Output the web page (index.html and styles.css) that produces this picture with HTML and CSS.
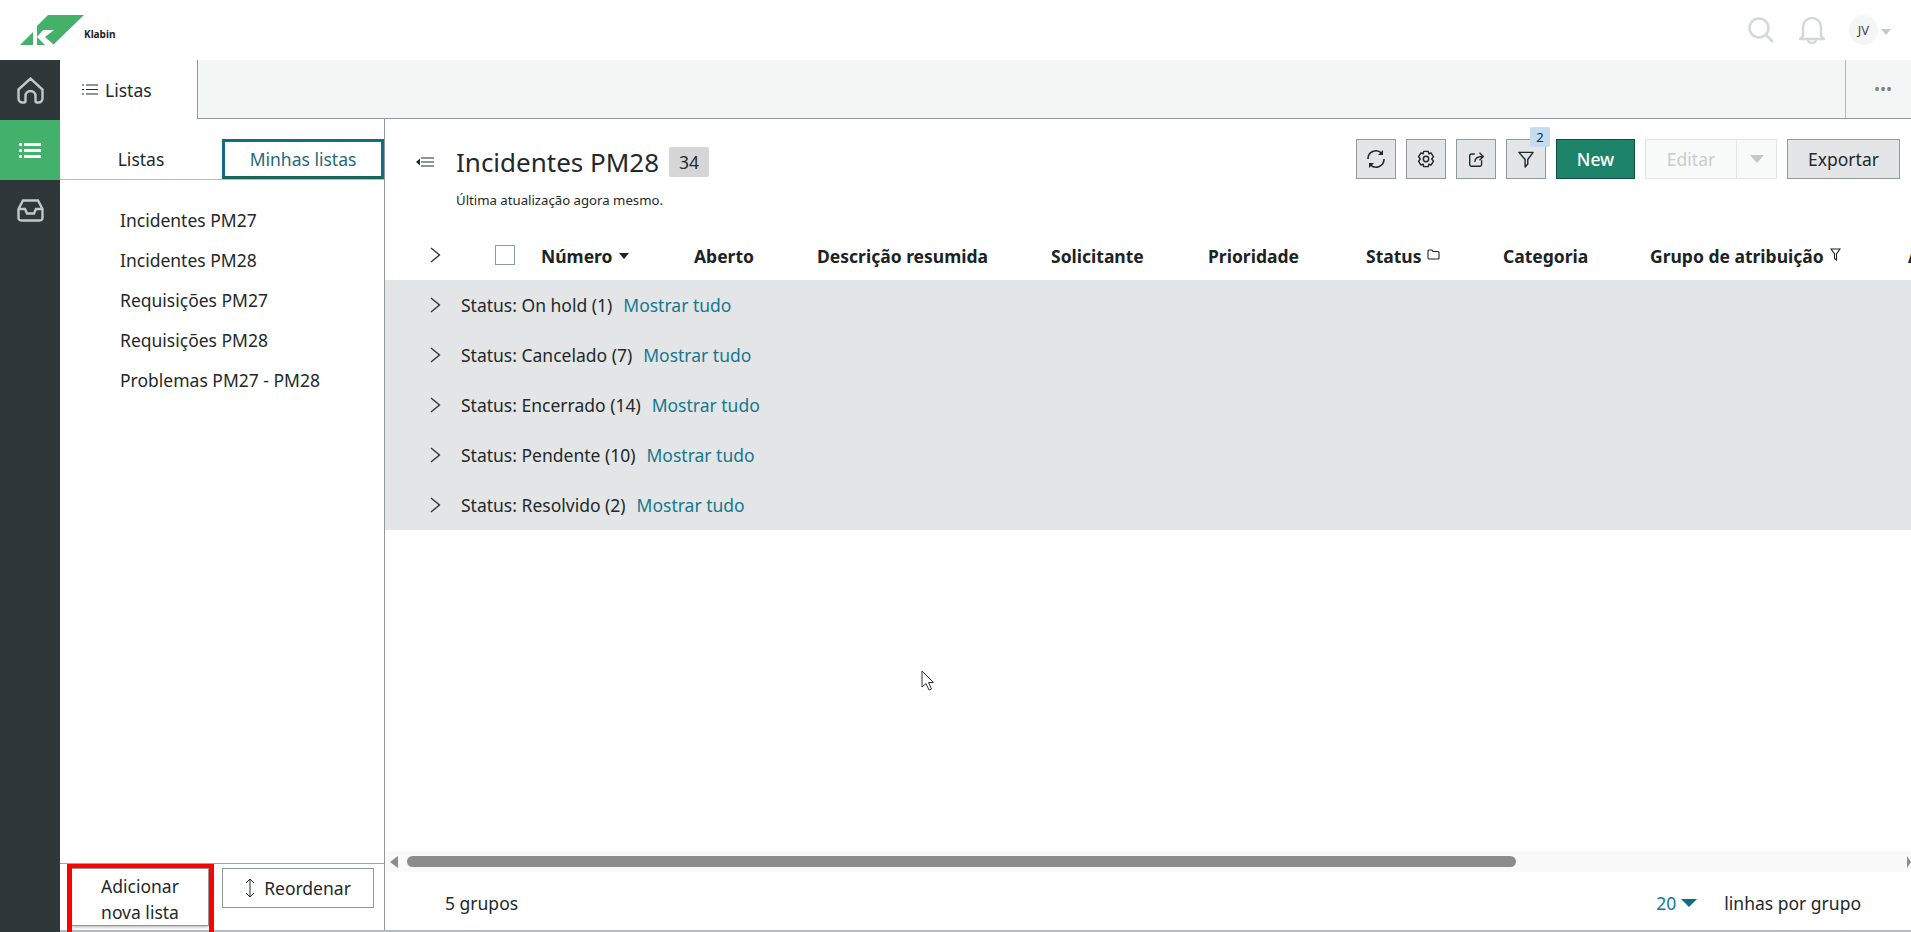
FILE: index.html
```html
<!DOCTYPE html>
<html lang="pt">
<head>
<title>Listas</title>
<meta charset="UTF-8">
<link rel="stylesheet" href="styles.css">
</head>
<body>
<header class="topbar">
	<div class="logo">
		<svg width="84" height="46" viewBox="0 0 84 46">
			<polygon fill="#43b16a" points="20,45 33,32 33,45"/>
			<polygon fill="#43b16a" points="48,15 84,15 53,45 37,45 37,26"/>
			<polygon fill="#fff" points="43,30 54,30 45,37 54,45 45,45 37,37"/>
		</svg>
		<span class="logo-name">Klabin</span>
	</div>
	<div class="top-actions">
		<svg class="top-search" width="26" height="26" viewBox="0 0 26 26"><circle cx="11" cy="11" r="9.5"/><path d="M18 18 L25 25"/></svg>
		<svg class="top-bell" width="26" height="28" viewBox="0 0 26 28"><path d="M4 20 V11 a9 9 0 0 1 18 0 V20 L25 23 H1 Z"/><path d="M9 23.5 a4 3.5 0 0 0 8 0"/></svg>
		<span class="avatar">JV</span>
		<span class="caret caret-user"></span>
	</div>
</header>

<div class="app">
	<nav class="rail">
		<a class="rail-item">
			<svg width="27" height="27" viewBox="0 0 27 27"><path d="M1.5 12.5 L13.5 1.5 L25.5 12.5 V21.5 a4 4 0 0 1-4 4 H20 a1.5 1.5 0 0 1-1.5-1.5 V19 a5 5 0 0 0-10 0 V24 a1.5 1.5 0 0 1-1.5 1.5 H5.5 a4 4 0 0 1-4-4 Z"/></svg>
		</a>
		<a class="rail-item rail-active">
			<svg width="22" height="15" viewBox="0 0 22 15"><path d="M0 1.5 H3 M5 1.5 H22 M0 7.5 H3 M5 7.5 H22 M0 13.5 H3 M5 13.5 H22"/></svg>
		</a>
		<a class="rail-item">
			<svg width="27" height="23" viewBox="0 0 27 23"><path d="M6 1.5 H21 L25.5 10 V19 a2.5 2.5 0 0 1-2.5 2.5 H4 A2.5 2.5 0 0 1 1.5 19 V10 Z M1.5 10 H8 L10 14.5 H17 L19 10 H25.5"/></svg>
		</a>
	</nav>

	<div class="workspace">
		<div class="tabbar">
			<div class="tab">
				<svg width="16" height="11" viewBox="0 0 16 11"><path d="M0 1 H2 M4 1 H16 M0 5.5 H2 M4 5.5 H16 M0 10 H2 M4 10 H16"/></svg>
				Listas
			</div>
			<div class="tab-fill"></div>
			<div class="tab-more">&bull;&bull;&bull;</div>
		</div>

		<div class="panels">
			<aside class="lists">
				<div class="lists-tabs">
					<span class="lists-tab">Listas</span>
					<span class="lists-tab lists-tab-on">Minhas listas</span>
				</div>
				<ul class="lists-items">
					<li>Incidentes PM27</li>
					<li>Incidentes PM28</li>
					<li>Requisições PM27</li>
					<li>Requisições PM28</li>
					<li>Problemas PM27 - PM28</li>
				</ul>
				<div class="lists-foot">
					<button class="btn-add">Adicionar<br>nova lista</button>
					<button class="btn-order">
						<svg width="10" height="20" viewBox="0 0 10 20"><path d="M5 1 V19 M1 5 L5 1 L9 5 M1 15 L5 19 L9 15"/></svg>
						Reordenar
					</button>
				</div>
			</aside>

			<main class="content">
				<div class="head">
					<div class="head-title">
						<div class="title-line">
							<svg class="collapse" width="18" height="10" viewBox="0 0 18 10"><path class="solid" d="M0 5 L4 1.5 V8.5 Z"/><path d="M5 1 H18 M5 5 H18 M5 9 H18"/></svg>
							<h1>Incidentes PM28</h1>
							<span class="count">34</span>
						</div>
						<p class="updated">Última atualização agora mesmo.</p>
					</div>
					<div class="toolbar">
						<button class="btn-icon"><svg width="20" height="20" viewBox="0 0 20 20"><path d="M2 10 a8 8 0 0 1 13.5-6 M18 10 a8 8 0 0 1-13.5 6"/><path class="solid" d="M17 1 V6 H12 Z M3 19 V14 H8 Z"/></svg></button>
						<button class="btn-icon"><svg width="18" height="18" viewBox="0 0 20 20"><path d="M7.5 1.5 H12.5 L13.2 4.2 L15.8 3.4 L18.3 7.6 L16.3 10 L18.3 12.4 L15.8 16.6 L13.2 15.8 L12.5 18.5 H7.5 L6.8 15.8 L4.2 16.6 L1.7 12.4 L3.7 10 L1.7 7.6 L4.2 3.4 L6.8 4.2 Z"/><circle cx="10" cy="10" r="3"/></svg></button>
						<button class="btn-icon"><svg width="17" height="17" viewBox="0 0 20 20"><path d="M8 3.5 H4 a2 2 0 0 0-2 2 V16 a2 2 0 0 0 2 2 H14 a2 2 0 0 0 2-2 V11"/><path d="M8 13 C8 8.5 11 6.5 17 6.5 M13.5 2 L18 6.5 L13.5 11"/></svg></button>
						<div class="filter-wrap">
							<button class="btn-icon"><svg width="16" height="19" viewBox="0 0 18 20"><path d="M1 2 H17 L11 10 V15 L8 18.5 V10 Z"/></svg></button>
							<span class="filter-badge">2</span>
						</div>
						<button class="btn-new">New</button>
						<div class="btn-split">
							<span class="split-label">Editar</span>
							<span class="split-arrow"><span class="caret caret-off"></span></span>
						</div>
						<button class="btn-export">Exportar</button>
					</div>
				</div>

				<div class="grid-area">
					<div class="grid-head">
						<span class="chev-cell"><svg class="chev" width="11" height="16" viewBox="0 0 11 16"><path d="M1 1 L9.5 8 L1 15"/></svg></span>
						<span class="check"></span>
						<span class="col">Número <span class="sort"></span></span>
						<span class="col">Aberto</span>
						<span class="col">Descrição resumida</span>
						<span class="col">Solicitante</span>
						<span class="col">Prioridade</span>
						<span class="col">Status <svg class="col-icon" width="13" height="11" viewBox="0 0 13 11"><path d="M1 2 a1 1 0 0 1 1-1 H5 L6 2.5 H11 a1 1 0 0 1 1 1 V9 a1 1 0 0 1-1 1 H2 a1 1 0 0 1-1-1 Z"/></svg></span>
						<span class="col">Categoria</span>
						<span class="col">Grupo de atribuição <svg class="col-icon" width="11" height="13" viewBox="0 0 11 13"><path d="M1 1 H10 L6.5 6 V12 L4.5 10.5 V6 Z"/></svg></span>
						<span class="col">A</span>
					</div>
					<div class="group"><svg class="chev" width="11" height="16" viewBox="0 0 11 16"><path d="M1 1 L9.5 8 L1 15"/></svg><span class="group-name">Status: On hold (1)</span><a class="link">Mostrar tudo</a></div>
					<div class="group"><svg class="chev" width="11" height="16" viewBox="0 0 11 16"><path d="M1 1 L9.5 8 L1 15"/></svg><span class="group-name">Status: Cancelado (7)</span><a class="link">Mostrar tudo</a></div>
					<div class="group"><svg class="chev" width="11" height="16" viewBox="0 0 11 16"><path d="M1 1 L9.5 8 L1 15"/></svg><span class="group-name">Status: Encerrado (14)</span><a class="link">Mostrar tudo</a></div>
					<div class="group"><svg class="chev" width="11" height="16" viewBox="0 0 11 16"><path d="M1 1 L9.5 8 L1 15"/></svg><span class="group-name">Status: Pendente (10)</span><a class="link">Mostrar tudo</a></div>
					<div class="group"><svg class="chev" width="11" height="16" viewBox="0 0 11 16"><path d="M1 1 L9.5 8 L1 15"/></svg><span class="group-name">Status: Resolvido (2)</span><a class="link">Mostrar tudo</a></div>
				</div>

				<div class="hscroll">
					<span class="arrow-left"></span>
					<span class="thumb"></span>
					<span class="arrow-right"></span>
				</div>
				<div class="pager">
					<span>5 grupos</span>
					<div class="pager-right">
						<span class="link">20</span><span class="caret caret-teal"></span>
						<span class="per-group">linhas por grupo</span>
					</div>
				</div>
			</main>
		</div>
	</div>
</div>

<!-- annotation and mouse pointer lying over the page -->
<div class="red-mark"></div>
<svg class="pointer" width="14" height="22" viewBox="0 0 14 22"><path d="M1 1 V17 L5 13.5 L8 20 L10.5 19 L7.5 12.5 H12.5 Z"/></svg>
</body>
</html>
```

FILE: styles.css
```css
* {
	box-sizing: border-box;
}
html, body {
	height: 100%;
}
body {
	margin: 0;
	overflow: hidden;
	font-family: "Noto Sans", Lato, sans-serif;
	font-size: 17.5px;
	color: #23292b;
	background: #fff;
}
svg {
	fill: none;
	stroke: currentColor;
	display: block;
}
svg .solid {
	fill: currentColor;
	stroke: none;
}
button {
	font: inherit;
	color: inherit;
	cursor: pointer;
}

/* top bar */
.topbar {
	height: 60px;
	display: flex;
	justify-content: space-between;
}
.logo {
	display: flex;
}
.logo svg {
	stroke: none;
}
.logo-name {
	font-size: 10px;
	font-weight: 700;
	color: #222;
	margin-top: 27px;
}
.top-actions {
	display: flex;
	align-items: center;
	padding-right: 20px;
	color: #d5d8d8;
}
.top-search {
	stroke-width: 2.5;
	margin-right: 25px;
}
.top-bell {
	stroke-width: 2.5;
	margin-right: 24px;
}
.avatar {
	width: 29px;
	height: 30px;
	border-radius: 50%;
	background: #f4f6f5;
	color: #444;
	font-size: 13px;
	display: flex;
	align-items: center;
	justify-content: center;
}
.caret {
	display: inline-block;
	width: 0;
	height: 0;
	border-left: 5px solid transparent;
	border-right: 5px solid transparent;
	border-top: 6px solid #c3c8c8;
}
.caret-user {
	margin-left: 3px;
	margin-top: 4px;
}

.app {
	display: flex;
	height: 872px;
}

/* dark rail */
.rail {
	width: 60px;
	flex: none;
	background: #2e3739;
	color: #c3c8c8;
}
.rail-item {
	height: 60px;
	display: flex;
	align-items: center;
	justify-content: center;
}
.rail-item svg {
	stroke-width: 2.4;
}
.rail-active {
	background: #43b16a;
	color: #fff;
}
.rail-active svg {
	stroke-width: 3;
}

.workspace {
	flex: 1;
	display: flex;
	flex-direction: column;
	min-width: 0;
	border-bottom: 2px solid #b4bcbc;
}

/* tab strip */
.tabbar {
	height: 59px;
	flex: none;
	display: flex;
	background: #f4f6f5;
	border-bottom: 1px solid #8e9a9b;
}
.tab {
	width: 138px;
	margin-bottom: -1px;
	background: #fff;
	border-right: 1px solid #8e9a9b;
	padding-left: 22px;
	display: flex;
	align-items: center;
	gap: 7px;
}
.tab-fill {
	flex: 1;
}
.tab-more {
	width: 66px;
	border-left: 1px solid #b4bcbc;
	padding-left: 9px;
	color: #7a8485;
	font-size: 16px;
	display: flex;
	align-items: center;
	justify-content: center;
}

.panels {
	flex: 1;
	display: flex;
	min-height: 0;
}

/* left list panel */
.lists {
	width: 325px;
	flex: none;
	display: flex;
	flex-direction: column;
	border-right: 1px solid #8e9a9b;
}
.lists-tabs {
	height: 61px;
	padding-top: 20px;
	display: flex;
	border-bottom: 1px solid #b4bcbc;
}
.lists-tab {
	width: 162px;
	display: flex;
	align-items: center;
	justify-content: center;
}
.lists-tab-on {
	width: 162px;
	border: 3px solid #0f6f80;
	border-bottom-color: #1b6458;
	color: #23697a;
}
.lists-items {
	list-style: none;
	margin: 0;
	padding: 20px 0 0 60px;
	flex: 1;
}
.lists-items li {
	height: 40px;
	line-height: 40px;
}
.lists-foot {
	height: 67px;
	padding: 4px 10px 0 11px;
	display: flex;
	justify-content: space-between;
	align-items: flex-start;
	border-top: 1px solid #9aa5a6;
}
.btn-add {
	width: 138px;
	height: 58px;
	padding: 3px 0 0;
	background: #fff;
	border: 1px solid #8e9a9b;
	box-shadow: 0 0 4px #888;
	line-height: 26px;
}
.btn-order {
	width: 152px;
	height: 40px;
	padding: 0;
	background: #fff;
	border: 1px solid #8e9a9b;
	display: flex;
	align-items: center;
	justify-content: center;
	gap: 9px;
}

/* main list */
.content {
	flex: 1;
	min-width: 0;
	display: flex;
	flex-direction: column;
}
.head {
	height: 111px;
	flex: none;
	padding: 20px 11px 0 31px;
	display: flex;
	justify-content: space-between;
}
.head-title {
	padding-top: 8px;
}
.title-line {
	display: flex;
	align-items: center;
	height: 30px;
}
.collapse {
	margin-right: 22px;
}
.title-line h1 {
	margin: 0 10px 0 0;
	font-size: 26px;
	font-weight: 400;
}
.count {
	width: 40px;
	height: 30px;
	background: #d6d6d6;
	border-radius: 2px;
	display: flex;
	align-items: center;
	justify-content: center;
}
.updated {
	margin: 14px 0 0 40px;
	font-size: 13.2px;
}
.toolbar {
	display: flex;
	gap: 10px;
	height: 40px;
	margin-left: auto;
}
.btn-icon {
	width: 40px;
	height: 40px;
	padding: 0;
	background: #e3e5e7;
	border: 1px solid #8e9a9b;
	display: flex;
	align-items: center;
	justify-content: center;
}
.btn-icon svg {
	stroke-width: 1.6;
	stroke-linejoin: round;
}
.filter-wrap {
	position: relative;
}
.filter-badge {
	position: absolute;
	top: -12px;
	right: -4px;
	width: 20px;
	height: 20px;
	background: #c5dcef;
	border-radius: 2px;
	font-size: 13px;
	display: flex;
	align-items: center;
	justify-content: center;
}
.btn-new {
	width: 79px;
	height: 40px;
	padding: 0;
	background: #1d846a;
	border: 1px solid #0f4f40;
	color: #fff;
	font-weight: 500;
}
.btn-split {
	width: 132px;
	height: 40px;
	display: flex;
	background: #f8f9f9;
	border: 1px solid #e3e5e7;
	color: #c8cccc;
}
.split-label {
	width: 91px;
	display: flex;
	align-items: center;
	justify-content: center;
	border-right: 1px solid #e3e5e7;
}
.split-arrow {
	flex: 1;
	display: flex;
	align-items: center;
	justify-content: center;
}
.caret-off {
	border-left-width: 7px;
	border-right-width: 7px;
	border-top-width: 8px;
}
.btn-export {
	width: 113px;
	height: 40px;
	padding: 0;
	background: #e3e5e7;
	border: 1px solid #8e9a9b;
}

/* grouped grid */
.grid-area {
	flex: 1;
	min-height: 0;
	overflow: hidden;
}
.grid-head {
	height: 50px;
	display: grid;
	grid-template-columns: 110px 46px 153px 123px 234px 157px 158px 137px 147px 258px 1fr;
	align-items: center;
	font-weight: 700;
	color: #1b2325;
	white-space: nowrap;
}
.chev-cell {
	padding-left: 45px;
}
.chev {
	stroke-width: 1.4;
	color: #2e3739;
}
.check {
	width: 20px;
	height: 20px;
	border: 1px solid #8e9a9b;
	background: #fff;
}
.col {
	display: flex;
	align-items: center;
	gap: 6px;
	margin-top: 2px;
}
.sort {
	width: 0;
	height: 0;
	border-left: 5px solid transparent;
	border-right: 5px solid transparent;
	border-top: 6px solid #1b2325;
}
.col-icon {
	stroke-width: 1.1;
	margin-top: -3px;
}
.group {
	height: 50px;
	background: #e3e5e7;
	padding-left: 45px;
	display: flex;
	align-items: center;
}
.group-name {
	margin-left: 20px;
	margin-right: 11px;
}
.link {
	color: #16788f;
}

/* horizontal scroll bar */
.hscroll {
	height: 21px;
	flex: none;
	background: #f9f9f9;
	display: flex;
	align-items: center;
	padding: 0 0 0 5px;
}
.arrow-left {
	border-top: 6px solid transparent;
	border-bottom: 6px solid transparent;
	border-right: 8px solid #8c8c8c;
	margin-right: 9px;
}
.thumb {
	width: 1109px;
	height: 11px;
	background: #8c8c8c;
	border-radius: 6px;
}
.arrow-right {
	margin-left: auto;
	border-top: 6px solid transparent;
	border-bottom: 6px solid transparent;
	border-left: 4px solid #8c8c8c;
}
.pager {
	height: 58px;
	flex: none;
	padding: 3px 50px 0 60px;
	display: flex;
	justify-content: space-between;
	align-items: center;
}
.pager-right {
	display: flex;
	align-items: center;
}
.caret-teal {
	border-top-color: #0f6f80;
	border-left-width: 8px;
	border-right-width: 8px;
	border-top-width: 8px;
	margin-left: 5px;
}
.per-group {
	margin-left: 27px;
}

/* overlays */
.red-mark {
	position: absolute;
	left: 67px;
	top: 864px;
	width: 147px;
	height: 80px;
	border-style: solid;
	border-color: #f00;
	border-width: 4px 5px;
}
.pointer {
	position: absolute;
	left: 921px;
	top: 670px;
	fill: #fff;
	stroke: #333;
	stroke-width: 1;
}
```
